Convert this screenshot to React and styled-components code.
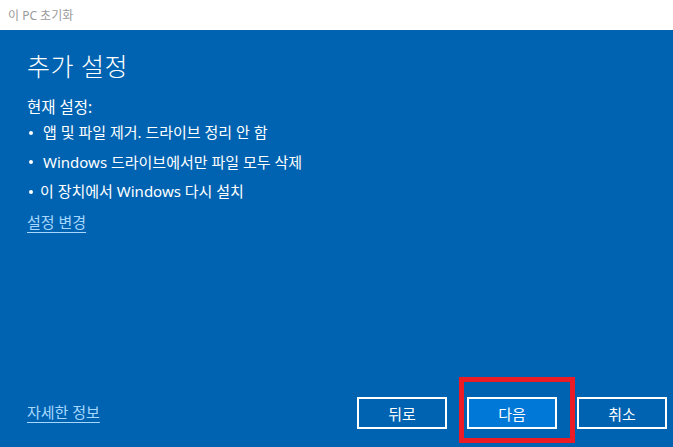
import React from "react";
import styled, { createGlobalStyle } from "styled-components";

const GlobalStyle = createGlobalStyle`
  html, body {
    margin: 0;
    padding: 0;
    width: 673px;
    height: 447px;
    overflow: hidden;
    font-family: "Noto Sans", "Noto Sans CJK KR", sans-serif;
  }
  #root {
    height: 100%;
  }
`;

const settings = [
  { text: "앱 및 파일 제거. 드라이브 정리 안 함", indent: 10 },
  { text: "Windows 드라이브에서만 파일 모두 삭제", indent: 10 },
  { text: "이 장치에서 Windows 다시 설치", indent: 7 },
];

const App = () => {
  return (
    <Window>
      <GlobalStyle />
      <TitleBar>이 PC 초기화</TitleBar>
      <Panel>
        <Heading>추가 설정</Heading>
        <Label>현재 설정:</Label>
        <List>
          {settings.map((item) => (
            <Item key={item.text} indent={item.indent}>
              <Dot />
              {item.text}
            </Item>
          ))}
        </List>
        <Link href="#">설정 변경</Link>
        <Footer>
          <Link href="#">자세한 정보</Link>
          <Buttons>
            <Button>뒤로</Button>
            <Highlight>
              <Button primary>다음</Button>
            </Highlight>
            <Button>취소</Button>
          </Buttons>
        </Footer>
      </Panel>
    </Window>
  );
};
export default App;

const Window = styled.div`
  display: flex;
  flex-direction: column;
  width: 673px;
  height: 447px;
`;
const TitleBar = styled.div`
  height: 30px;
  flex: none;
  display: flex;
  align-items: center;
  padding-left: 8px;
  background: #ffffff;
  color: #9a9a9a;
  font-size: 12px;
`;
const Panel = styled.div`
  flex: 1;
  display: flex;
  flex-direction: column;
  background: #0063b1;
  color: #ffffff;
  padding: 0 6px 0 27px;
`;
const Heading = styled.div`
  margin-top: 16px;
  font-size: 25px;
  line-height: 40px;
  font-weight: 300;
  letter-spacing: 0.5px;
`;
const Label = styled.div`
  margin-top: 9px;
  font-size: 15.5px;
  line-height: 24px;
`;
const List = styled.div`
  margin-top: -1px;
  display: flex;
  flex-direction: column;
`;
const Item = styled.div`
  display: flex;
  align-items: center;
  font-size: 15px;
  line-height: 29.5px;
  white-space: pre;
  gap: ${(p) => p.indent}px;
`;
const Dot = styled.span`
  width: 4px;
  height: 4px;
  margin-left: 2px;
  border-radius: 50%;
  background: #ffffff;
`;
const Link = styled.a`
  align-self: flex-start;
  color: #a6d8ff;
  font-size: 15px;
  line-height: 30px;
  text-decoration: underline;
  text-underline-offset: 4px;
`;
const Footer = styled.div`
  margin-top: auto;
  margin-bottom: 18px;
  display: flex;
  align-items: center;
  justify-content: space-between;
`;
const Buttons = styled.div`
  display: flex;
  align-items: center;
  gap: 20px;
`;
const Highlight = styled.div`
  position: relative;
  display: flex;
  &::after {
    content: "";
    position: absolute;
    left: -8px;
    right: -18px;
    top: -20px;
    bottom: -14px;
    border: 5px solid #ed1c24;
    pointer-events: none;
  }
`;
const Button = styled.button`
  width: 90px;
  height: 32px;
  box-sizing: border-box;
  border: 2px solid #ffffff;
  background: ${(p) => (p.primary ? "#0078d7" : "transparent")};
  color: #ffffff;
  font-family: inherit;
  font-size: 15px;
  padding: 0;
  cursor: pointer;
`;
